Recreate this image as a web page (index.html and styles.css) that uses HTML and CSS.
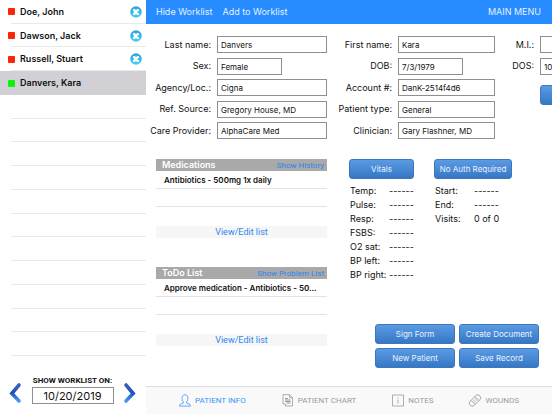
FILE: index.html
```html
<!DOCTYPE html>
<html lang="en">
<head>
<meta charset="utf-8">
<title>Patient Info</title>
<link rel="stylesheet" href="styles.css">
</head>
<body>
<svg class="defs" aria-hidden="true">
  <defs>
    <linearGradient id="orb" x1="0" y1="0" x2="0" y2="1"><stop offset="0" stop-color="#2b9fd9"/><stop offset="1" stop-color="#45d3f7"/></linearGradient>
    <linearGradient id="arrow" x1="0" y1="0" x2="0" y2="1"><stop offset="0" stop-color="#3a62b4"/><stop offset=".5" stop-color="#1e50c4"/><stop offset="1" stop-color="#4a98f4"/></linearGradient>
    <symbol id="remove" viewBox="0 0 12 12"><circle cx="6" cy="6" r="5.8" fill="url(#orb)"/><path d="M4.200 4.200l3.600 3.600M7.800 4.200l-3.600 3.600" stroke="#fff" stroke-width="2.600" stroke-linecap="round"/></symbol>
  </defs>
</svg>
<div class="app">
  <aside class="sidebar">
    <ul class="worklist">
      <li><i class="dot red"></i><span>Doe, John</span><button class="remove" aria-label="Remove"><svg><use href="#remove"/></svg></button></li>
      <li><i class="dot red"></i><span>Dawson, Jack</span><button class="remove" aria-label="Remove"><svg><use href="#remove"/></svg></button></li>
      <li><i class="dot red"></i><span>Russell, Stuart</span><button class="remove" aria-label="Remove"><svg><use href="#remove"/></svg></button></li>
      <li class="selected"><i class="dot green"></i><span>Danvers, Kara</span></li>
      <li></li><li></li><li></li><li></li><li></li><li></li><li></li><li></li><li></li><li></li><li></li>
    </ul>
    <div class="date-nav">
      <button class="step" aria-label="Previous day"><svg viewBox="0 0 14 22"><path d="M11 3L3.800 11.500l7.200 7.500" fill="none" stroke="url(#arrow)" stroke-width="3.600" stroke-linecap="round"/></svg></button>
      <div class="date-box">
        <label for="date">SHOW WORKLIST ON:</label>
        <input id="date" value="10/20/2019">
      </div>
      <button class="step" aria-label="Next day"><svg viewBox="0 0 14 22"><path d="M3 3l7.200 8.500-7.200 7.500" fill="none" stroke="url(#arrow)" stroke-width="3.600" stroke-linecap="round"/></svg></button>
    </div>
  </aside>
  <main class="main">
    <header class="topbar">
      <a href="#">Hide Worklist</a>
      <a href="#">Add to Worklist</a>
      <a href="#" class="menu">MAIN MENU</a>
    </header>
    <form class="details">
      <label for="last">Last name:</label><input id="last" value="Danvers">
      <label for="first">First name:</label><input id="first" value="Kara">
      <label for="mi">M.I.:</label><input id="mi">
      <label for="sex">Sex:</label><input id="sex" class="short" value="Female">
      <label for="dob">DOB:</label><input id="dob" class="short" value="7/3/1979">
      <label for="dos">DOS:</label><input id="dos" value="10/20/2019">
      <label for="agency">Agency/Loc.:</label><input id="agency" value="Cigna">
      <label for="account">Account #:</label><input id="account" value="DanK-2514f4d6">
      <button type="button" class="btn more" aria-label="More"></button>
      <label for="ref" class="col1">Ref. Source:</label><input id="ref" value="Gregory House, MD">
      <label for="type">Patient type:</label><input id="type" value="General">
      <label for="care" class="col1">Care Provider:</label><input id="care" value="AlphaCare Med">
      <label for="clinician">Clinician:</label><input id="clinician" value="Gary Flashner, MD">
    </form>
    <div class="body">
      <div class="panels">
        <section class="panel">
          <div class="panel-head"><h2>Medications</h2><a href="#">Show History</a></div>
          <ul><li>Antibiotics - 500mg 1x daily</li><li></li><li></li></ul>
          <a href="#" class="panel-foot">View/Edit list</a>
        </section>
        <section class="panel">
          <div class="panel-head"><h2>ToDo List</h2><a href="#">Show Problem List</a></div>
          <ul><li>Approve medication - Antibiotics - 50...</li><li></li><li></li></ul>
          <a href="#" class="panel-foot">View/Edit list</a>
        </section>
      </div>
      <div class="side">
        <div class="stats">
          <section>
            <button class="btn vitals">Vitals</button>
            <table>
              <tr><th>Temp:</th><td>------</td></tr>
              <tr><th>Pulse:</th><td>------</td></tr>
              <tr><th>Resp:</th><td>------</td></tr>
              <tr><th>FSBS:</th><td>------</td></tr>
              <tr><th>O2 sat:</th><td>------</td></tr>
              <tr><th>BP left:</th><td>------</td></tr>
              <tr><th>BP right:</th><td>------</td></tr>
            </table>
          </section>
          <section>
            <button class="btn auth">No Auth Required</button>
            <table>
              <tr><th>Start:</th><td>------</td></tr>
              <tr><th>End:</th><td>------</td></tr>
              <tr><th>Visits:</th><td>0 of 0</td></tr>
            </table>
          </section>
        </div>
        <div class="actions">
          <button class="btn">Sign Form</button><button class="btn">Create Document</button>
          <button class="btn">New Patient</button><button class="btn">Save Record</button>
        </div>
      </div>
    </div>
    <nav class="tabs">
      <a href="#" class="active"><svg viewBox="0 0 12 13"><path d="M4.300 7.800C3 6.500 3 4.500 3.200 3.200 3.500 1.500 4.600.8 6 .8s2.500.7 2.800 2.400C9 4.500 9 6.500 7.700 7.800v1.300l3 1.100.8 1.900H.5l.8-1.900 3-1.100z"/></svg>PATIENT INFO</a>
      <a href="#"><svg viewBox="0 0 12 13"><path d="M1 .6h6.500l3 3v8.400H3.500M7.500 .6v3h3M1 .6v9.400h2.500V12"/><path d="M3 4.500h3M3 6h5.500M3 7.500h5.500M4.500 9h4" stroke-width="1"/></svg>PATIENT CHART</a>
      <a href="#"><svg viewBox="0 0 12 13"><path d="M.5 1h11v11H.5zM6 5.500v4M6 3.300v1.200"/></svg>NOTES</a>
      <a href="#"><svg viewBox="0 0 12 13"><g transform="rotate(-45 6 6.500)"><rect x="-.8" y="3.600" width="13.600" height="5.800" rx="2.900"/><path d="M3.300 3.600v5.800M8.700 3.600v5.800"/><path d="M4.500 5.300h3M4.500 6.500h3M4.500 7.700h3" stroke-dasharray="1 1"/></g></svg>WOUNDS</a>
    </nav>
  </main>
</div>
</body>
</html>
```
FILE: styles.css
```css
* { box-sizing: border-box; }
body {
  margin: 0;
  font-family: Inter, "Liberation Sans", sans-serif;
  font-size: 9px;
  line-height: 12px;
  color: #111;
  background: #fff;
}
a { text-decoration: none; color: #2a87f0; }
ul { list-style: none; margin: 0; padding: 0; }
h2 { margin: 0; }
button { font: inherit; padding: 0; border: 0; background: none; }
input {
  font: inherit;
  color: #111;
  min-width: 0;
  border: 1px solid #8f8f8f;
  border-radius: 0;
  background: #fff;
}
.defs { position: absolute; width: 0; height: 0; }

.app { display: flex; height: 100vh; overflow: hidden; }

.sidebar { flex: 0 0 146px; display: flex; flex-direction: column; }
.worklist { flex: 1; display: flex; flex-direction: column; font-weight: 600; }
.worklist li {
  flex: 1;
  display: flex;
  align-items: center;
  gap: 5px;
  padding: 0 4px 0 8px;
  background: linear-gradient(#e9e9eb, #e9e9eb) 11px 100% / 100% 1px no-repeat;
}
.worklist li.selected { background: #d1d0d5; }
.worklist span { flex: 1; }
.dot { width: 7px; height: 7px; border-radius: 1px; }
.red { background: #fb2605; }
.green { background: #0bf40b; }
.remove, .remove svg { display: block; width: 12px; height: 12px; }

.date-nav {
  display: flex;
  align-items: flex-end;
  justify-content: space-between;
  padding: 19px 9px 10px 8px;
}
.date-box { width: 82px; text-align: center; }
.date-box label { display: block; font-family: Roboto, sans-serif; font-size: 8px; font-weight: 700; white-space: nowrap; }
.date-box input {
  display: block;
  width: 100%;
  height: 17px;
  font-size: 11px;
  text-align: center;
}
.step, .step svg { display: block; width: 14px; height: 22px; }

.main { flex: 1; min-width: 0; display: flex; flex-direction: column; }
.topbar {
  flex: 0 0 24px;
  display: flex;
  align-items: center;
  gap: 10px;
  padding: 0 11px 0 10px;
  background: #268cff;
}
.topbar a { color: #e4f0ff; }
.topbar .menu { margin-left: auto; }

.details {
  display: grid;
  grid-template-columns: 65px 110px 59px 97px 33px 65px;
  column-gap: 6px;
  align-content: space-between;
  align-items: center;
  min-height: 103px;
  margin-top: 12px;
}
.details label { text-align: right; white-space: nowrap; }
.details input { height: 17px; padding: 1px 3px 0; font-size: 8px; }
.details .short { width: 65px; }
.details .col1 { grid-column: 1; }
.details .more { grid-column: 6; height: 20px; margin: 6px 0 -9px; align-self: start; }

.btn {
  height: 20px;
  border: 1px solid #3c78bd;
  border-radius: 3px;
  background: linear-gradient(#5b9be3, #3677c5);
  color: #eaf3ff;
  font-size: 8px;
  white-space: nowrap;
}

.body { flex: 1; display: flex; gap: 22px; padding: 20px 13px 18px 10px; }
.panels { flex: 0 0 171px; min-width: 0; display: flex; flex-direction: column; gap: 29px; }
.panel-head {
  display: flex;
  justify-content: space-between;
  padding: 0 3px 0 6px;
  background: #a9a9a9;
}
.panel-head h2 { font-size: 9px; font-weight: 600; color: #fff; }
.panel-head a { font-family: Roboto, sans-serif; font-size: 8px; line-height: 14px; height: 12px; }
.panel li {
  height: 18px;
  padding: 0 8px;
  border-bottom: 1px solid #e2e2e4;
  font-size: 8px;
  font-weight: 600;
  line-height: 19px;
  white-space: nowrap;
}
.panel li:last-child { border: 0; height: 19px; }
.panel-foot { display: block; background: #f6f6f6; font-family: Roboto, sans-serif; text-align: center; }

.side { flex: 1; display: flex; flex-direction: column; justify-content: space-between; }
.stats { display: flex; gap: 20px; }
.stats table { margin: 5px 0 0 1px; border-spacing: 0; }
.stats th, .stats td { padding: 0; font-weight: 400; text-align: left; line-height: 14px; white-space: nowrap; }
.stats th { width: 39px; }
.vitals { width: 65px; }
.auth { width: 78px; }
.actions {
  display: grid;
  grid-template-columns: 80px 80px;
  gap: 4px;
  justify-content: end;
}

.tabs {
  flex: 0 0 28px;
  display: flex;
  align-items: center;
  justify-content: center;
  gap: 36px;
  border-top: 1px solid #dedede;
  background: #f9f9f9;
  font-family: Roboto, sans-serif;
  font-size: 8px;
}
.tabs a { display: flex; align-items: center; gap: 4px; color: #9a9a9a; white-space: nowrap; }
.tabs .active { color: #3b93f5; }
.tabs svg { width: 12px; height: 13px; overflow: visible; fill: none; stroke: currentColor; stroke-width: .8; }
```
